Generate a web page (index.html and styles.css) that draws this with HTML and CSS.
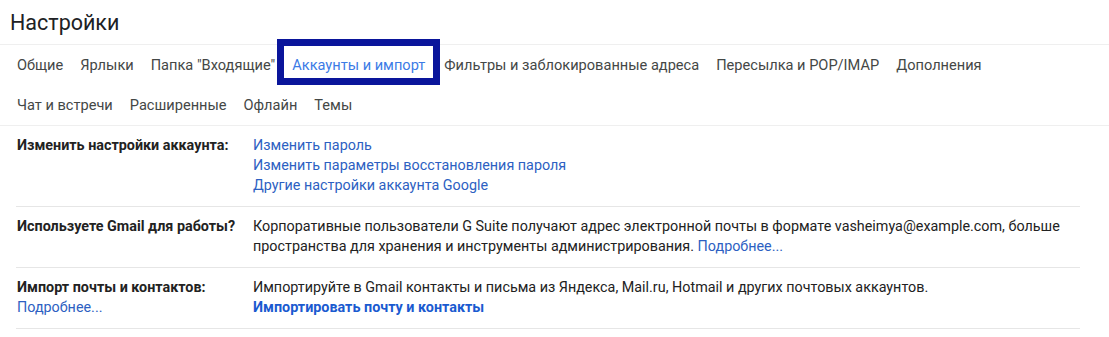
FILE: index.html
```html
<!DOCTYPE html>
<html lang="ru">
<head>
<meta charset="utf-8">
<title>Настройки</title>
<link rel="stylesheet" href="styles.css">
</head>
<body>
<div class="page">
  <header class="header">
    <h1 class="title">Настройки</h1>
  </header>
  <nav class="tabs">
    <div class="tab-row">
      <a class="tab">Общие</a>
      <a class="tab">Ярлыки</a>
      <a class="tab">Папка "Входящие"</a>
      <a class="tab tab-active">Аккаунты и импорт</a>
      <a class="tab">Фильтры и заблокированные адреса</a>
      <a class="tab">Пересылка и POP/IMAP</a>
      <a class="tab">Дополнения</a>
    </div>
    <div class="tab-row">
      <a class="tab">Чат и встречи</a>
      <a class="tab">Расширенные</a>
      <a class="tab">Офлайн</a>
      <a class="tab">Темы</a>
    </div>
  </nav>
  <div class="settings">
    <div class="row">
      <div class="label"><b>Изменить настройки аккаунта:</b></div>
      <div class="value">
        <a class="link">Изменить пароль</a>
        <a class="link">Изменить параметры восстановления пароля</a>
        <a class="link">Другие настройки аккаунта Google</a>
      </div>
    </div>
    <div class="row">
      <div class="label"><b>Используете Gmail для работы?</b></div>
      <div class="value">
        <p class="text">Корпоративные пользователи G Suite получают адрес электронной почты в формате vasheimya@example.com, больше пространства для хранения и инструменты администрирования. <a class="inline-link">Подробнее...</a></p>
      </div>
    </div>
    <div class="row">
      <div class="label">
        <b>Импорт почты и контактов:</b>
        <a class="link">Подробнее...</a>
      </div>
      <div class="value">
        <p class="text">Импортируйте в Gmail контакты и письма из Яндекса, Mail.ru, Hotmail и других почтовых аккаунтов.</p>
        <a class="link link-bold">Импортировать почту и контакты</a>
      </div>
    </div>
  </div>
</div>
</body>
</html>
```

FILE: styles.css
```css
html, body {
  margin: 0;
  padding: 0;
  background: #ffffff;
}

body {
  font-family: Roboto, "Liberation Sans", Arial, sans-serif;
  color: #222222;
}

.page {
  width: 1109px;
}

.header {
  height: 44px;
  border-bottom: 1px solid #efefef;
  padding-left: 10px;
  display: flex;
  align-items: center;
}

.title {
  margin: 0;
  font-size: 21.5px;
  font-weight: 400;
  color: #202124;
  line-height: 28px;
  margin-top: 1px;
}

.tabs {
  border-bottom: 1px solid #efefef;
  padding-left: 17px;
}

.tab-row {
  display: flex;
  height: 40px;
  align-items: center;
  gap: 17px;
}

.tab {
  font-size: 14.6px;
  color: #444746;
  line-height: 20px;
  white-space: nowrap;
}

.tab-active {
  position: relative;
  color: #3c7be6;
  margin-right: 2px;
}

.tab-active::after {
  content: "";
  position: absolute;
  left: -15px;
  right: -15px;
  top: -16px;
  bottom: -10px;
  border: 7px solid #0a159b;
}

.settings {
  margin: 0 29px 0 16px;
}

.row {
  display: flex;
  padding: 10px 0;
  border-bottom: 1px solid #e6e6e6;
  font-size: 14.35px;
  line-height: 20px;
}

.label {
  width: 236px;
  flex: none;
  display: flex;
  flex-direction: column;
  padding-left: 1px;
}

.label b {
  font-weight: 700;
  color: #222222;
}

.value {
  flex: 1;
  display: flex;
  flex-direction: column;
}

.text {
  margin: 0;
  color: #222222;
}

.link, .inline-link {
  color: #2d5fc2;
}

.link-bold {
  font-weight: 700;
  color: #1a5ad0;
}
```
